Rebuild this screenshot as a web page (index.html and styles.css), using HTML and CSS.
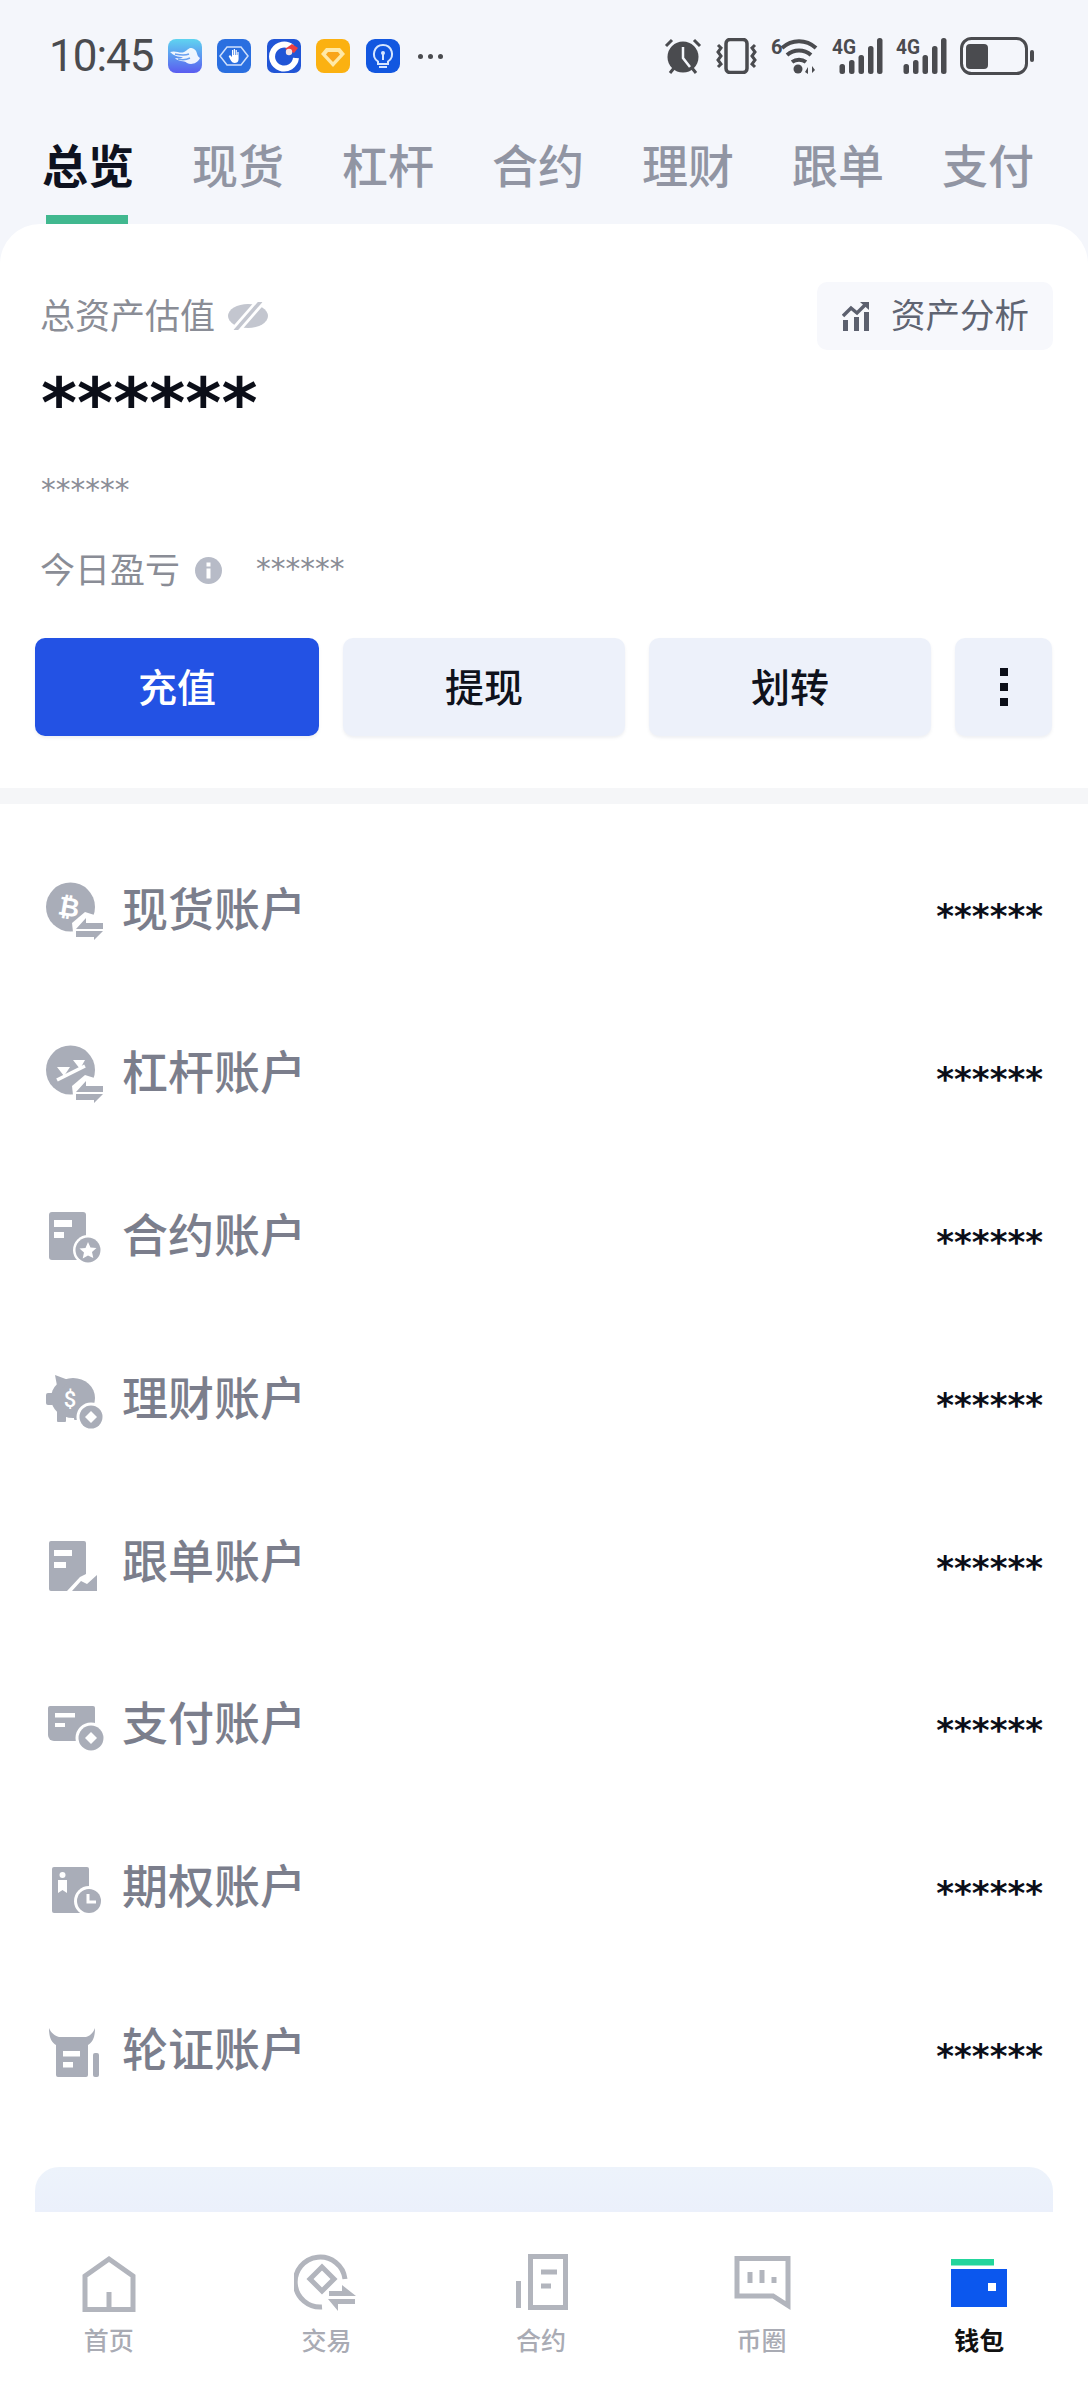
FILE: index.html
```html
<!DOCTYPE html>
<html lang="zh-CN">
<head>
<meta charset="UTF-8">
<meta name="viewport" content="width=device-width, initial-scale=1.0">
<title>钱包</title>
<link rel="stylesheet" href="styles.css">
</head>
<body>
<div class="page">

    <div class="statusBar">
        <div class="statusLeft">
            <span class="time">10:45</span>
            <svg class="appIcon" viewBox="0 0 34 34"><defs><linearGradient id="cloudBg" x1="0" y1="0" x2="0" y2="1"><stop offset="0" stop-color="#5fd4f0"/><stop offset="1" stop-color="#5a5cf0"/></linearGradient></defs><rect width="34" height="34" rx="8" fill="url(#cloudBg)"/><path d="M2 13c6-2 10 2 14 0s5-6 10-3c4 2 2 7 6 9-3 6-9 7-13 5-3-3-9-1-12-5 3 0 6 1 8-1-5 0-9-1-13-5z" fill="#fff" opacity=".9"/><path d="M7 15c5 1 9 2 14 0M10 20c4 1 8 1 12-1" stroke="#6aa0f0" stroke-width="1.5" fill="none"/></svg>
            <svg class="appIcon" viewBox="0 0 34 34"><rect width="34" height="34" rx="8" fill="#2a6fe0"/><path d="M10 8h14l7 9-7 9H10L3 17z" fill="none" stroke="#cfe0fb" stroke-width="1.5"/><path d="M12 17l1-1 2 2v-7h1.2v5h.6v-6h1.2v6h.6v-5h1.2v5h.6v-3h1.2v7c0 3-2 4-4 4-3 0-4-3-6-7z" fill="#fff"/></svg>
            <svg class="appIcon" viewBox="0 0 34 34"><rect width="34" height="34" rx="7" fill="#2155d6"/><path d="M25 8.500A12 12 0 1 0 29 19" fill="none" stroke="#fff" stroke-width="6"/><circle cx="17" cy="17" r="4" fill="#2155d6"/><path d="M18 10l7-5 6 4-4 5z" fill="#ef3f3f"/><circle cx="22" cy="13" r="3.200" fill="#f6e4e4"/></svg>
            <svg class="appIcon" viewBox="0 0 34 34"><rect width="34" height="34" rx="8" fill="#fbb111"/><path d="M10 9h14l5 6-12 13L5 15z" fill="#ffe9a6"/><path d="M12 13h10l2 2.500-7 7.500-7-7.500z" fill="#f9a51a"/></svg>
            <svg class="appIcon" viewBox="0 0 34 34"><rect width="34" height="34" rx="9" fill="#1257e0"/><path d="M17 6a9 9 0 0 0-5 16.500V25h10v-2.500A9 9 0 0 0 17 6z" fill="none" stroke="#d6e6ff" stroke-width="2"/><path d="M17 14v7M13 28h8" stroke="#d6e6ff" stroke-width="2"/><circle cx="17" cy="14" r="2" fill="#d6e6ff"/></svg>
            <span class="moreDots"><i></i><i></i><i></i></span>
        </div>
        <div class="statusRight">
            <svg class="alarm" viewBox="0 0 38 38"><circle cx="19" cy="20" r="15.500" fill="#4a4b4f"/><path d="M19 10v11l7 9" stroke="#f4f6fb" stroke-width="2.500" fill="none"/><path d="M2 9l6-6M36 9l-6-6M6 36l4-5M32 36l-4-5" stroke="#4a4b4f" stroke-width="3"/></svg>
            <svg class="vibrate" viewBox="0 0 43 36"><rect x="11" y="1.500" width="21" height="33" rx="4" fill="none" stroke="#4a4b4f" stroke-width="3.500"/><path d="M3 7l3 3-3 4 3 4-3 4 3 4-3 3M40 7l-3 3 3 4-3 4 3 4-3 4 3 3" stroke="#4a4b4f" stroke-width="3" fill="none"/></svg>
            <svg class="wifi" viewBox="0 -5 48 46"><text x="0" y="16" class="sigText">6</text><path d="M11 10c10-9 24-9 34 0M16 17c7-6 17-6 24 0M21 24c4-3 10-3 14 0" fill="none" stroke="#4a4b4f" stroke-width="4"/><circle cx="27" cy="31" r="4.500" fill="#4a4b4f"/><path d="M34 34l3-5v7zM41 28v7l3-3z" fill="#4a4b4f"/></svg>
            <svg class="signal" viewBox="0 -5 51 46"><text x="0" y="16" class="sigText" textLength="24" lengthAdjust="spacingAndGlyphs">4G</text><g fill="#4a4b4f"><rect x="7.500" y="26" width="5.500" height="10" rx="2.500"/><rect x="17" y="22" width="5.500" height="14" rx="2.500"/><rect x="26.500" y="17" width="5.500" height="19" rx="2.500"/><rect x="36" y="8" width="5.500" height="28" rx="2.500"/><rect x="45" y="0" width="5.500" height="36" rx="2.500"/></g></svg>
            <svg class="signal" viewBox="0 -5 51 46"><text x="0" y="16" class="sigText" textLength="24" lengthAdjust="spacingAndGlyphs">4G</text><g fill="#4a4b4f"><rect x="7.500" y="26" width="5.500" height="10" rx="2.500"/><rect x="17" y="22" width="5.500" height="14" rx="2.500"/><rect x="26.500" y="17" width="5.500" height="19" rx="2.500"/><rect x="36" y="8" width="5.500" height="28" rx="2.500"/><rect x="45" y="0" width="5.500" height="36" rx="2.500"/></g></svg>
            <svg class="battery" viewBox="0 0 74 38"><rect x="1.500" y="1.500" width="65" height="35" rx="10" fill="none" stroke="#4a4b4f" stroke-width="3"/><rect x="6" y="7" width="22" height="25" rx="4" fill="#4a4b4f"/><rect x="70" y="13" width="4" height="12" rx="2" fill="#4a4b4f"/></svg>
        </div>
    </div>

    <div class="tabs">
        <div class="tab active">总览<span class="tabBar"></span></div>
        <div class="tab">现货</div>
        <div class="tab">杠杆</div>
        <div class="tab">合约</div>
        <div class="tab">理财</div>
        <div class="tab">跟单</div>
        <div class="tab">支付</div>
    </div>

    <div class="card">
        <div class="summary">
            <div class="summaryHead">
                <div class="totalLabel">
                    <span class="liftText">总资产估值</span>
                    <svg class="eye" viewBox="0 0 40 28"><ellipse cx="20" cy="14" rx="20" ry="12" fill="#c3c6cf"/><path d="M6 30L34-2" stroke="#fff" stroke-width="9"/><path d="M7 29L33-1" stroke="#c3c6cf" stroke-width="3.500"/></svg>
                </div>
                <div class="analysisBtn">
                    <svg class="analysisIcon" viewBox="0 0 28 30"><g fill="#5c606e"><rect x="1" y="19" width="5" height="11"/><rect x="12" y="16" width="5" height="14"/><rect x="22" y="11" width="5" height="19"/></g><path d="M1 15l8-8 6 5L24 3" fill="none" stroke="#5c606e" stroke-width="3.500"/><path d="M18 1h9v8z" fill="#5c606e"/></svg>
                    <span class="liftText">资产分析</span>
                </div>
            </div>
            <div class="bigStars">******</div>
            <div class="subStars">******</div>
            <div class="pnlRow">
                <span class="liftText">今日盈亏</span>
                <svg class="infoIcon" viewBox="0 0 27 27"><circle cx="13.500" cy="13.500" r="13.500" fill="#b7bbc7"/><rect x="11.500" y="11.500" width="4" height="10" fill="#fff"/><rect x="11.500" y="5.500" width="4" height="4" fill="#fff"/></svg>
                <span class="pnlStars">******</span>
            </div>
            <div class="actions">
                <div class="btn primary">充值</div>
                <div class="btn">提现</div>
                <div class="btn">划转</div>
                <div class="btn moreBtn"><i></i><i></i><i></i></div>
            </div>
        </div>

        <div class="divider"></div>

        <div class="accounts">
            <div class="row">
                <svg class="rowIcon" viewBox="0 0 64 64"><circle cx="26.500" cy="30" r="24.500" fill="#a9adb8"/><text x="25" y="39" class="btcText" transform="rotate(10 25 30)">₿</text><path d="M28 46l13-11 22 7v22H30z" fill="#fff"/><path d="M32 52l10-11v5h17v6zM32 54h27l-9 9v-3H32z" fill="#a9adb8"/></svg>
                <span class="rowName">现货账户</span>
                <span class="rowStars">******</span>
            </div>
            <div class="row">
                <svg class="rowIcon" viewBox="0 0 64 64"><circle cx="26.500" cy="30" r="24.500" fill="#a9adb8"/><path d="M13 40l28-14" stroke="#fff" stroke-width="3.500"/><path d="M13 27h13l-6 9zM29 20h12l-5 9z" fill="#fff"/><path d="M28 46l13-11 22 7v22H30z" fill="#fff"/><path d="M32 52l10-11v5h17v6zM32 54h27l-9 9v-3H32z" fill="#a9adb8"/></svg>
                <span class="rowName">杠杆账户</span>
                <span class="rowStars">******</span>
            </div>
            <div class="row">
                <svg class="rowIcon" viewBox="0 0 64 64"><rect x="5" y="9" width="37" height="48" rx="3" fill="#a9adb8"/><rect x="10" y="17" width="18" height="7" fill="#fff"/><rect x="10" y="29" width="10" height="6" fill="#fff"/><circle cx="44" cy="47" r="15" fill="#fff"/><circle cx="44" cy="47" r="12.500" fill="#a9adb8"/><path d="M44 39l2.500 5.500 6 .6-4.500 4 1.300 6L44 52.500 38.700 55.500l1.300-6-4.500-4 6-.6z" fill="#fff"/></svg>
                <span class="rowName">合约账户</span>
                <span class="rowStars">******</span>
            </div>
            <div class="row">
                <svg class="rowIcon" viewBox="0 0 64 64"><ellipse cx="29" cy="32" rx="22" ry="20" fill="#a9adb8"/><path d="M11 9l16 6-13 10z" fill="#a9adb8"/><rect x="2" y="27" width="8" height="12" rx="2" fill="#a9adb8"/><rect x="13" y="44" width="9" height="12" rx="1" fill="#a9adb8"/><rect x="30" y="44" width="9" height="10" rx="1" fill="#a9adb8"/><text x="26" y="41" class="dollarText">$</text><circle cx="47" cy="51" r="14.500" fill="#fff"/><circle cx="47" cy="51" r="11.500" fill="#a9adb8"/><path d="M47 45l6 6-6 6-6-6z" fill="#fff"/></svg>
                <span class="rowName">理财账户</span>
                <span class="rowStars">******</span>
            </div>
            <div class="row">
                <svg class="rowIcon" viewBox="0 0 64 64"><path d="M7 12h33a2 2 0 0 1 2 2v31l-6 3-13 14H7a2 2 0 0 1-2-2V14a2 2 0 0 1 2-2z" fill="#a9adb8"/><rect x="10" y="21" width="18" height="6" fill="#fff"/><rect x="10" y="33" width="12" height="6" fill="#fff"/><path d="M28 62l9-10 6 3 10-9v16z" fill="#a9adb8"/></svg>
                <span class="rowName">跟单账户</span>
                <span class="rowStars">******</span>
            </div>
            <div class="row">
                <svg class="rowIcon" viewBox="0 0 64 64"><path d="M6 15h43a2 2 0 0 1 2 2v33H10a6 6 0 0 1-6-6V17a2 2 0 0 1 2-2z" fill="#a9adb8"/><rect x="11" y="22" width="20" height="4.500" fill="#fff"/><rect x="11" y="32" width="10" height="4" fill="#fff"/><circle cx="47" cy="47" r="15.500" fill="#fff"/><circle cx="47" cy="47" r="12.500" fill="#a9adb8"/><path d="M47 41l6 6-6 6-6-6z" fill="#fff"/></svg>
                <span class="rowName">支付账户</span>
                <span class="rowStars">******</span>
            </div>
            <div class="row">
                <svg class="rowIcon" viewBox="0 0 64 64"><rect x="8" y="13" width="37" height="46" rx="2" fill="#a9adb8"/><circle cx="18.500" cy="21" r="3" fill="#fff"/><path d="M14 26h9v13l-4.500-3-4.500 3z" fill="#fff"/><circle cx="45" cy="47" r="15" fill="#fff"/><circle cx="45" cy="47" r="12" fill="#a9adb8"/><path d="M44 40v8h8" fill="none" stroke="#fff" stroke-width="3"/></svg>
                <span class="rowName">期权账户</span>
                <span class="rowStars">******</span>
            </div>
            <div class="row">
                <svg class="rowIcon" viewBox="0 0 64 64"><path d="M5 11c0 9 2 14 7 17v30a2 2 0 0 0 2 2h28a2 2 0 0 0 2-2V28c5-3 7-8 7-17-2 5-5 8-9 9H15c-4-1-8-4-10-9z" fill="#a9adb8"/><rect x="49" y="36" width="6" height="24" rx="2" fill="#a9adb8"/><rect x="19" y="34" width="17" height="5.500" fill="#fff"/><rect x="19" y="45" width="10" height="5.500" fill="#fff"/></svg>
                <span class="rowName">轮证账户</span>
                <span class="rowStars">******</span>
            </div>
        </div>

        <div class="promo"></div>
    </div>

    <div class="bottomNav">
        <div class="navItem">
            <svg class="navIcon" viewBox="0 0 64 64"><path d="M8 59.500V26L32 9l24 17v33.500z" fill="none" stroke="#b2b5bd" stroke-width="5"/><path d="M32 42v18" stroke="#b2b5bd" stroke-width="5"/></svg>
            <span class="navLabel">首页</span>
        </div>
        <div class="navItem">
            <svg class="navIcon" viewBox="0 0 64 64"><path d="M51 29A25 25 0 1 0 28 57" fill="none" stroke="#b2b5bd" stroke-width="5"/><path d="M28 17l12 12-12 12-12-12z" fill="none" stroke="#b2b5bd" stroke-width="5"/><path d="M48 35l14 11H35v-5h13zM34 49h27v5H44v7z" fill="#b2b5bd"/></svg>
            <span class="navLabel">交易</span>
        </div>
        <div class="navItem">
            <svg class="navIcon" viewBox="0 0 64 64"><path d="M18.500 6.500h35v51h-35z" fill="none" stroke="#b2b5bd" stroke-width="5"/><path d="M6.500 31v27" stroke="#b2b5bd" stroke-width="5"/><path d="M29 22h16M29 36h10" stroke="#b2b5bd" stroke-width="5"/></svg>
            <span class="navLabel leftLabel">合约</span>
        </div>
        <div class="navItem">
            <svg class="navIcon" viewBox="0 0 64 64"><path d="M7 8.500h51v47L43 46H7z" fill="none" stroke="#b2b5bd" stroke-width="5"/><path d="M20 22v11M32 20v13M44 27v6" stroke="#b2b5bd" stroke-width="5"/></svg>
            <span class="navLabel">币圈</span>
        </div>
        <div class="navItem current">
            <svg class="navIcon" viewBox="0 0 64 64"><rect x="4" y="9" width="43" height="6.500" fill="#23d59c"/><rect x="4" y="19" width="56" height="38" fill="#0b57ee"/><rect x="41" y="33" width="8" height="8" fill="#fff"/></svg>
            <span class="navLabel">钱包</span>
        </div>
    </div>

</div>
</body>
</html>
```

FILE: styles.css
```css
* {
    box-sizing: border-box;
}
body {
    margin: 0;
    padding: 0;
    font-family: 'Noto Sans CJK SC', 'Noto Sans', sans-serif;
    background-color: #f4f6fb;
}
.page {
    width: 1088px;
    height: 2400px;
    overflow: hidden;
    display: flex;
    flex-direction: column;
}
svg {
    display: block;
    flex-shrink: 0;
}

/* status bar */
.statusBar {
    height: 112px;
    flex-shrink: 0;
    display: flex;
    justify-content: space-between;
    align-items: center;
    padding: 0 54px 0 49px;
}
.statusLeft, .statusRight {
    display: flex;
    align-items: center;
}
.time {
    font-family: 'Roboto', sans-serif;
    font-size: 44px;
    letter-spacing: -1px;
    color: #4a4b4f;
    margin-right: 14px;
}
.appIcon {
    width: 34px;
    height: 34px;
    margin-right: 15.5px;
}
.moreDots {
    display: flex;
    gap: 5px;
    margin-left: 3px;
}
.moreDots i {
    width: 5px;
    height: 5px;
    border-radius: 50%;
    background: #4a4b4f;
}
.statusRight {
    gap: 13px;
}
.alarm {
    width: 38px;
    height: 38px;
}
.vibrate {
    width: 43px;
    height: 36px;
}
.wifi {
    width: 48px;
    height: 46px;
}
.signal {
    width: 51px;
    height: 46px;
}
.battery {
    width: 74px;
    height: 38px;
}
.sigText {
    font-family: 'Roboto', sans-serif;
    font-size: 20px;
    font-weight: 700;
    fill: #4a4b4f;
}

/* top tabs */
.tabs {
    height: 112px;
    flex-shrink: 0;
    display: flex;
    gap: 58px;
    padding: 24px 0 0 42px;
}
.tab {
    width: 92px;
    font-size: 46px;
    line-height: 54px;
    font-weight: 500;
    color: #9195a3;
    white-space: nowrap;
}
.tab.active {
    font-weight: 700;
    color: #0e1220;
}
.tabBar {
    display: block;
    width: 82px;
    height: 9px;
    margin: 25px 0 0 4px;
    background: #41b88f;
}

/* main card */
.card {
    flex: 1;
    min-height: 0;
    overflow: hidden;
    background: #fff;
    border-radius: 40px 40px 0 0;
    display: flex;
    flex-direction: column;
}
.summary {
    padding: 58px 35px 0;
    height: 564px;
    flex-shrink: 0;
}
.summaryHead {
    display: flex;
    justify-content: space-between;
    align-items: center;
    height: 68px;
}
.liftText {
    margin-bottom: 6px;
}
.totalLabel {
    display: flex;
    align-items: center;
    gap: 13px;
    margin-left: 5px;
    font-size: 35px;
    color: #8a8d96;
}
.eye {
    width: 40px;
    height: 28px;
}
.analysisBtn {
    width: 236px;
    height: 68px;
    display: flex;
    align-items: center;
    gap: 21px;
    padding-left: 25px;
    border-radius: 10px;
    background: #f7f8fc;
    font-size: 34.5px;
    color: #5f6472;
}
.analysisIcon {
    width: 28px;
    height: 30px;
}
.bigStars {
    font-family: 'DejaVu Sans', sans-serif;
    font-weight: 700;
    font-size: 69px;
    line-height: 70px;
    color: #0b0e18;
    margin: 18px 0 0 6px;
}
.subStars {
    font-family: 'DejaVu Sans', sans-serif;
    font-size: 29.5px;
    line-height: 34px;
    color: #8b8e97;
    margin: 35px 0 0 6px;
}
.pnlRow {
    display: flex;
    align-items: center;
    margin: 43px 0 0 5px;
    height: 40px;
    font-size: 35px;
    color: #8a8d96;
}
.infoIcon {
    width: 27px;
    height: 27px;
    margin-left: 15px;
}
.pnlStars {
    font-family: 'DejaVu Sans', sans-serif;
    font-size: 29.5px;
    margin: 0 0 3px 34px;
}
.actions {
    display: flex;
    gap: 24px;
    margin-top: 48px;
}
.btn {
    width: 282px;
    height: 98px;
    padding-bottom: 5px;
    display: flex;
    align-items: center;
    justify-content: center;
    border-radius: 10px;
    background: #edf1fa;
    box-shadow: 0 2px 3px rgba(120, 130, 160, 0.12);
    font-size: 39px;
    font-weight: 500;
    color: #0f121c;
}
.btn.primary {
    width: 284px;
    background: #2352e4;
    color: #fff;
}
.moreBtn {
    width: 97px;
    padding-bottom: 0;
    flex-direction: column;
    gap: 7px;
}
.moreBtn i {
    width: 8px;
    height: 8px;
    background: #0b0e18;
}
.divider {
    height: 16px;
    flex-shrink: 0;
    background: #f5f6f8;
}

/* account rows */
.accounts {
    padding: 24px 0 37px;
}
.row {
    height: 162.8px;
    display: flex;
    align-items: center;
    padding: 0 45px 0 44px;
    gap: 14px;
}
.rowIcon {
    width: 64px;
    height: 64px;
}
.rowName {
    font-size: 46px;
    font-weight: 500;
    color: #7b7e8c;
    margin-bottom: 6px;
}
.rowStars {
    margin-left: auto;
    padding-top: 14px;
    font-family: 'DejaVu Sans', sans-serif;
    font-weight: 700;
    font-size: 34px;
    color: #0b0e18;
}
.btcText {
    font-family: 'DejaVu Sans', sans-serif;
    font-size: 26px;
    font-weight: 700;
    fill: #fff;
    text-anchor: middle;
}
.dollarText {
    font-family: 'Roboto', sans-serif;
    font-size: 22px;
    font-weight: 500;
    fill: #fff;
    text-anchor: middle;
}
.promo {
    flex: 1;
    margin: 0 35px;
    border-radius: 24px 24px 0 0;
    background: linear-gradient(#edf3fb, #ebf0fb);
}

/* bottom navigation */
.bottomNav {
    height: 188px;
    flex-shrink: 0;
    display: grid;
    grid-template-columns: repeat(5, 1fr);
    background: #fff;
    padding-top: 38px;
}
.navItem {
    display: flex;
    flex-direction: column;
    align-items: center;
    gap: 10px;
}
.navIcon {
    width: 64px;
    height: 64px;
}
.navLabel {
    font-size: 25px;
    line-height: 30px;
    font-weight: 500;
    color: #a9abb4;
}
.leftLabel {
    margin-right: 6px;
}
.current .navLabel {
    color: #111;
    font-weight: 700;
}
```
